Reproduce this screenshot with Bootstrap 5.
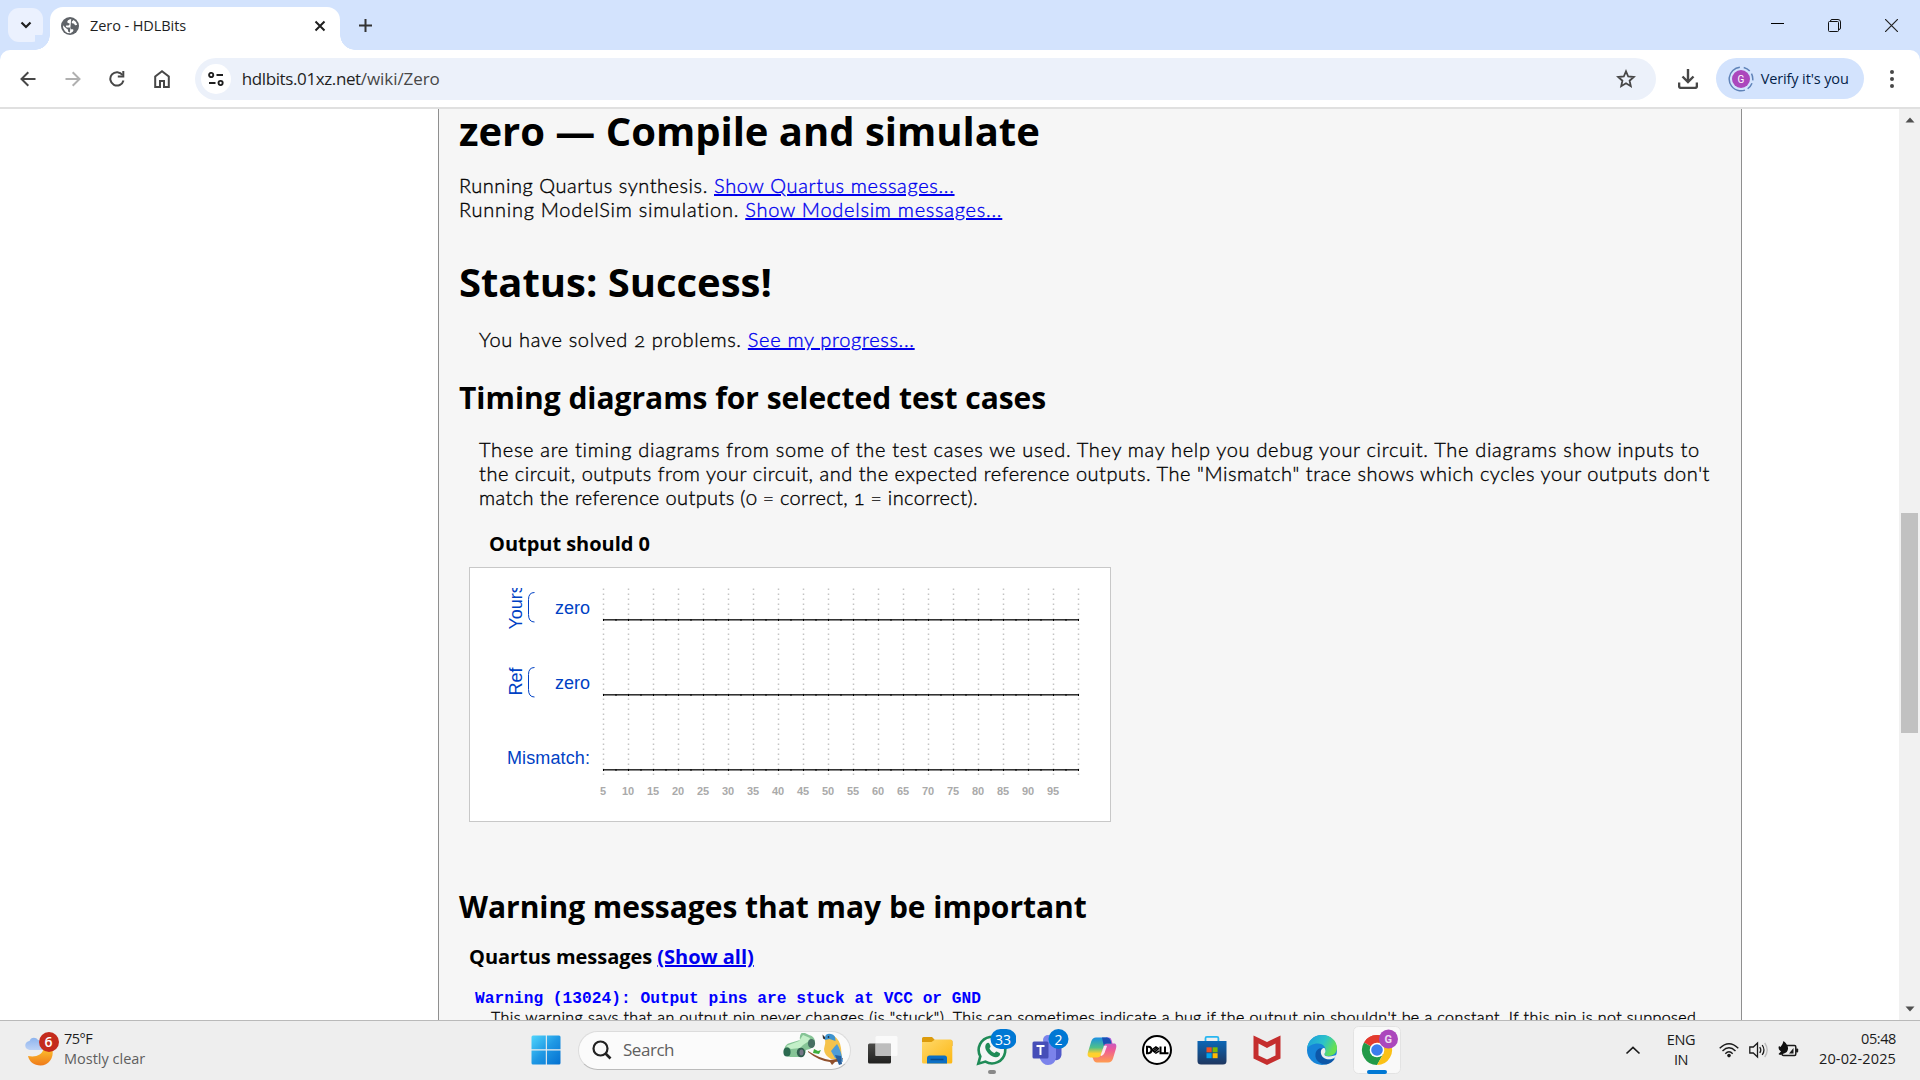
<!DOCTYPE html>
<html lang="en">
<head>
<meta charset="utf-8">
<title>Zero - HDLBits</title>
<link href="https://cdn.jsdelivr.net/npm/bootstrap@5.3.0/dist/css/bootstrap.min.css" rel="stylesheet">
<style>
body{width:1920px;height:1080px;overflow:hidden;background:#fff;color:#000;font-family:"Open Sans","Noto Sans",sans-serif}
svg{display:block;flex:none}
.ws{white-space:nowrap}
.strip{height:50px;background:#d3e3fd}
.tabsearch{width:35px;height:34px;margin:8px 7px 0 8px;border-radius:11px;background:#ebf1fe}
.tab{width:290px;height:43px;margin-top:7px;background:#fff;border-radius:13px 13px 0 0;padding:0 14px 6px 11px}
.tab::before,.tab::after{content:"";position:absolute;bottom:0;width:15px;height:15px}
.tab::before{left:-15px;background:radial-gradient(circle at 0 0,#d3e3fd 14.5px,#fff 15px)}
.tab::after{right:-15px;background:radial-gradient(circle at 100% 0,#d3e3fd 14.5px,#fff 15px)}
.tabtitle{font-size:14.5px;letter-spacing:-.08px;color:#1f1f1f;line-height:20px;margin-left:11px}
.wc{width:57px;height:50px}
.toolbarwrap{background:#d3e3fd;height:59px}
.tools{height:59px;background:#fff;border-radius:10px 10px 0 0;border-bottom:2px solid #e0e0e0;padding-left:5.5px}
.tcell{width:44.7px;height:44px}
.omni{width:1461px;height:42px;margin-left:10.5px;border-radius:21px;background:#ecf1fa;padding:0 20px 0 6px}
.site{width:30px;height:30px;border-radius:50%;background:#fff}
.url{font-size:17px;line-height:24px;color:#1f1f1f;margin-left:11px;letter-spacing:-.39px}
.url span{color:#474747;letter-spacing:-.06px}
.dl{width:46px;margin-left:9px}
.verify{width:148px;height:41px;border-radius:21px;background:#d3e3fd;margin-left:5px;padding-left:12px}
.vtext{font-size:14.5px;color:#041e49;margin-left:7px;letter-spacing:-.13px}
.viewport{height:911px}
.article-col{margin-left:438px;width:1304px;background:#f6f6f6;border:solid #8f8f8f;border-width:0 1px;padding-left:20px}
.scroller{width:21px;background:#f1f1f1}
.thumb{width:17px;height:220px;background:#c1c1c1;margin-top:390px}
h1,h2,h3{font-weight:700;margin:0;white-space:nowrap;color:#000}
h1{font-size:40px;line-height:40px;letter-spacing:-.02px}
h2{font-size:30px;line-height:30px;letter-spacing:-.03px}
h3{font-size:20px;line-height:20px;letter-spacing:-.03px}
.prose{font-family:Lato,sans-serif;font-weight:300;font-size:20px;line-height:24px;margin:0;white-space:nowrap;font-variant-numeric:oldstyle-nums;font-variant-ligatures:none;letter-spacing:.68px;-webkit-text-stroke:.35px}
.ls-a{letter-spacing:.55px}.ls-b{letter-spacing:.745px}.ls-c{letter-spacing:.539px}.ls-d{letter-spacing:.383px}
.ind{margin-left:20px}
.article-col a{color:#00e}
.quartus{font:700 16.2px/18px "Liberation Mono",monospace;color:#00f;white-space:pre;letter-spacing:.017px}
.hint{font-family:Lato,sans-serif;font-weight:300;font-size:16px;line-height:20px;white-space:nowrap;font-variant-ligatures:none;letter-spacing:.415px;-webkit-text-stroke:.35px;margin:-1px 0 0 32px}
.wavebox{width:642px;height:255px;background:#fff;border:1px solid #c8c8c8;margin-left:10px}
.taskbar{height:60px;background:#eee;box-shadow:inset 0 1px #b9b9b9}
.weather{width:518px;padding-left:24px}
.app{width:55px;height:48px}
.searchpill{width:273px;height:39px;border-radius:20px;background:#fbfbfb;border:1px solid #dcdcdc;border-bottom-color:#bbb;margin:0 3px 0 5px;padding:0 6px 0 13px}
.searchtext{font-size:17px;color:#5f5f5f;margin-left:11px;letter-spacing:-.47px}
.tray{font-size:14.5px;line-height:20px;color:#1b1b1b}
</style>
<script src="https://cdn.jsdelivr.net/npm/bootstrap@5.3.0/dist/js/bootstrap.bundle.min.js"></script>
</head>
<body class="d-flex flex-column">
<header>
<div class="strip d-flex">
  <div class="tabsearch d-flex align-items-center justify-content-center"><svg width="12" height="12" viewBox="0 0 12 12"><path d="M1.500 3.500 6 8l4.500-4.500" fill="none" stroke="#1f1f1f" stroke-width="2.200"/></svg></div>
  <div class="tab position-relative d-flex align-items-center">
    <svg width="18" height="18" viewBox="0 0 18 18"><circle cx="9" cy="9" r="9" fill="#5f6368"/><path d="M10.200 2C7.500 2.300 6 4 6.300 5.300c.3.900 1.500.6 2.200 1.300.6.8-.2 1.500-1 1.900H5.200c-.8.600-.2 1.700.8 1.900h2.400c1.300 0 1.500 1 1.700 1.900h1.600c1 .3.8 1.400.2 2.100-.7.900-1.600.5-2 1.900A7.200 7.200 0 0 1 2 8.200l3.300 3.300c.8.600 1.700.6 1.700 1.600v1.500c.6.600 1.700.3 1.900 1.400" fill="#fff"/><path d="M12.600 3c-.4.900-2 1-1.900 2.300.1 1.200 1 1.100 1.900 1.200.9.200.7 1.400 1.600 1.700.9.200 1.500-.3 2-.5A7.200 7.200 0 0 0 12.600 3" fill="#fff"/></svg>
    <span class="tabtitle ws">Zero - HDLBits</span>
    <svg class="ms-auto" width="12" height="12" viewBox="0 0 12 12"><path d="m1.500 1.500 9 9m0-9-9 9" stroke="#1f1f1f" stroke-width="2"/></svg>
  </div>
  <div class="d-flex align-items-center ms-3"><svg style="margin-left:3px" width="13" height="13" viewBox="0 0 13 13"><path d="M6.500 0v13M0 6.500h13" stroke="#333" stroke-width="2"/></svg></div>
  <div class="d-flex ms-auto">
    <div class="wc d-flex align-items-center justify-content-center"><svg width="13" height="13" viewBox="0 0 13 13"><path d="M0 4.500h13" stroke="#000"/></svg></div>
    <div class="wc d-flex align-items-center justify-content-center"><svg width="13" height="13" viewBox="0 0 13 13"><g fill="none" stroke="#111"><rect x=".5" y="2.500" width="10" height="10" rx="1"/><path d="M2.500 2.500V2A1.500 1.500 0 0 1 4 .5h6A2.500 2.500 0 0 1 12.500 3v6a1.500 1.500 0 0 1-1.500 1.500h-.5"/></g></svg></div>
    <div class="wc d-flex align-items-center justify-content-center"><svg width="13" height="13" viewBox="0 0 13 13"><path d="m0 0 13 13M13 0 0 13" stroke="#222" stroke-width="1.200"/></svg></div>
  </div>
</div>
<div class="toolbarwrap">
<div class="tools d-flex align-items-center">
  <div class="tcell d-flex align-items-center justify-content-center"><svg width="16" height="16" viewBox="0 0 16 16"><path d="M15.500 8H2M8.300 1.200 1.500 8l6.800 6.800" fill="none" stroke="#474747" stroke-width="2"/></svg></div>
  <div class="tcell d-flex align-items-center justify-content-center"><svg width="16" height="16" viewBox="0 0 16 16"><path d="M.5 8H14M7.700 1.200 14.500 8l-6.800 6.800" fill="none" stroke="#b0b0b0" stroke-width="2"/></svg></div>
  <div class="tcell d-flex align-items-center justify-content-center"><svg width="16" height="16" viewBox="0 0 16 16"><path d="M13.500 4A6.700 6.700 0 1 0 14.500 9.500" fill="none" stroke="#474747" stroke-width="2"/><path d="M15.300 0v6.500H8.800v-2h4.500V0z" fill="#474747"/></svg></div>
  <div class="tcell d-flex align-items-center justify-content-center"><svg width="16" height="18" viewBox="0 0 16 18"><path d="M1.200 6.500 8 1.300l6.800 5.200v10.400H10v-6H6v6H1.200z" fill="none" stroke="#474747" stroke-width="2"/></svg></div>
  <div class="omni d-flex align-items-center">
    <div class="site d-flex align-items-center justify-content-center"><svg width="16" height="14" viewBox="0 0 16 14"><g fill="none" stroke="#1f1f1f" stroke-width="1.900"><circle cx="3.200" cy="3" r="2.100"/><path d="M8.500 3H15M1 11h6.500"/><circle cx="12.600" cy="11" r="2.100"/></g></svg></div>
    <div class="url ws">hdlbits.01xz.net<span>/wiki/Zero</span></div>
    <svg class="ms-auto" width="20" height="20" viewBox="0 0 20 20"><path d="m10 2.300 2.200 5.200 5.600.5-4.200 3.700 1.200 5.500-4.800-2.900-4.800 2.900 1.200-5.500L2.200 8l5.600-.5z" fill="none" stroke="#474747" stroke-width="1.800"/></svg>
  </div>
  <div class="dl d-flex align-items-center justify-content-center"><svg width="20" height="20" viewBox="0 0 20 20"><g fill="none" stroke="#474747" stroke-width="2.400"><path d="M10 0v12M4.500 7.500 10 13l5.500-5.500M1.100 13.500v3.600q0 1.800 1.800 1.800h14.200q1.800 0 1.800-1.800v-3.600"/></g></svg></div>
  <div class="verify d-flex align-items-center">
    <svg width="26" height="26" viewBox="0 0 26 26"><circle cx="13" cy="13" r="11.800" fill="none" stroke="#5f83b8" stroke-width="1.500" stroke-dasharray="34 4 7 3 7 3 7 3"  transform="rotate(98 13 13)"/><circle cx="13" cy="13" r="9" fill="#ab47bc"/><text x="13" y="17" font-size="10" text-anchor="middle" fill="#fff" font-family="Roboto">G</text></svg>
    <span class="vtext ws">Verify it's you</span>
  </div>
  <svg style="margin-left:26px" width="4" height="18" viewBox="0 0 4 18"><g fill="#474747"><circle cx="2" cy="2" r="2"/><circle cx="2" cy="9" r="2"/><circle cx="2" cy="16" r="2"/></g></svg>
</div>
</div>
</header>

<main class="viewport d-flex overflow-hidden">
  <article class="article-col overflow-hidden">
    <h1 class="pt-1" style="margin-top:-2px">zero — Compile and simulate</h1>
    <p class="prose" style="margin-top:22px"><span class="ls-a">Running Quartus synthesis.</span> <a href="#">Show Quartus messages...</a><br><span class="ls-b">Running ModelSim simulation. <a href="#">Show Modelsim messages...</a></span></p>
    <h1 style="margin-top:41px">Status: Success!</h1>
    <p class="prose ind" style="margin-top:25px">You have solved 2 problems. <a href="#">See my progress...</a></p>
    <h2 style="margin-top:32px">Timing diagrams for selected test cases</h2>
    <p class="prose ind" style="margin-top:24px">These are timing diagrams from some of the test cases we used. They may help you debug your circuit. The diagrams show inputs to<br><span class="ls-c">the circuit, outputs from your circuit, and the expected reference outputs. The "Mismatch" trace shows which cycles your outputs don't</span><br><span class="ls-d">match the reference outputs (0 = correct, 1 = incorrect).</span></p>
    <h3 style="margin:25px 0 13px 30px">Output should 0</h3>
    <div class="wavebox"><svg id="wave" width="640" height="253" viewBox="470 568 640 253" font-family="Liberation Sans, Arial, sans-serif"></svg></div>
    <h2 style="margin-top:70px">Warning messages that may be important</h2>
    <h3 style="margin:25px 0 0 10px">Quartus messages <a href="#">(Show all)</a></h3>
    <div class="quartus" style="margin:23px 0 0 16px">Warning (13024): Output pins are stuck at VCC or GND</div>
    <div class="hint">This warning says that an output pin never changes (is "stuck"). This can sometimes indicate a bug if the output pin shouldn't be a constant. If this pin is not supposed</div>
  </article>
  <div class="scroller ms-auto d-flex flex-column align-items-center">
    <svg width="10" height="6" viewBox="0 0 10 6" style="margin-top:8px"><path d="M5 .5 9.500 5.500h-9z" fill="#505050"/></svg>
    <div class="thumb"></div>
    <svg class="mt-auto" width="10" height="6" viewBox="0 0 10 6" style="margin-bottom:8px"><path d="M.5.500h9L5 5.500z" fill="#505050"/></svg>
  </div>
</main>

<footer class="taskbar d-flex align-items-center">
  <div class="weather d-flex flex-shrink-0">
    <svg width="36" height="36" viewBox="24 1026 36 36"><defs><linearGradient id="mo" x2="0" y2="1"><stop stop-color="#fcbf2d"/><stop offset="1" stop-color="#ef7a1a"/></linearGradient><linearGradient id="cl" x2="0" y2="1"><stop stop-color="#8db4ee"/><stop offset="1" stop-color="#bdd2f6"/></linearGradient></defs><path d="M52.500 1044c1.500 8-4 15.500-12 15.500-6.500 0-11-3.500-12.500-9.500 8 1.500 14-1 15.500-7z" fill="url(#mo)"/><path d="M30 1044a4.500 4.500 0 0 1-.5-9c1-4 6.500-4.500 8.500-1 4 .5 5 4 5 10z" fill="url(#cl)"/><circle cx="49" cy="1036" r="10" fill="#c42b1c"/><text x="48.500" y="1041" font-size="14" font-weight="600" fill="#fff" text-anchor="middle" font-family="Open Sans">6</text></svg>
    <div class="tray ws" style="margin:-3px 0 0 4px"><div style="letter-spacing:-.5px">75°F</div><div style="color:#5e5e5e">Mostly clear</div></div>
  </div>
  <div class="app d-flex justify-content-center"><svg width="48" height="48" viewBox="0 0 48 48"><defs><linearGradient id="wn" x1="0" y1="0" x2="1" y2="1"><stop stop-color="#50d5fc"/><stop offset=".5" stop-color="#1f98e4"/><stop offset="1" stop-color="#0470d0"/></linearGradient></defs><path d="M11 9.500h12.800v13.800H9.500V11q0-1.500 1.500-1.500zM24.900 9.500H37q1.500 0 1.500 1.500v12.300H24.900zM9.500 24.400h14.300v14.100H11q-1.500 0-1.500-1.500zM24.900 24.400h13.600V37q0 1.500-1.500 1.500H24.900z" fill="url(#wn)"/></svg></div>
  <div class="searchpill d-flex align-items-center flex-shrink-0">
    <svg width="20" height="20" viewBox="0 0 20 20"><circle cx="8.500" cy="8.500" r="7" fill="none" stroke="#222" stroke-width="2.200"/><path d="m13.500 13.500 5 5" stroke="#222" stroke-width="2.600"/></svg>
    <span class="searchtext ws">Search</span>
    <svg class="ms-auto" width="62" height="34" viewBox="782 1034 62 34"><path d="M784 1051q1-6 6-7l10-3q-1-6 3-8l6 3q5 1 6 6 0 6-5 8l-4 1q-1 7-6 7l-10 0q-6-1-6-7z" fill="#86c496"/><path d="M786 1047l13-5 4-6 7 3-1 3-6 4-3 3-9 1z" fill="#c3efc8"/><ellipse cx="787" cy="1053" rx="3.600" ry="4.500" fill="#2c6a50"/><ellipse cx="801" cy="1053.500" rx="4.200" ry="4.800" fill="#315e4e"/><ellipse cx="811.500" cy="1044.500" rx="3.600" ry="4.600" fill="#476f63"/><ellipse cx="801.500" cy="1053.500" rx="2" ry="3" fill="#778"/><path d="M808 1052q13 8 22 9l13-2-1 3-7 1-3 3-2-3q-11-1-22-10z" fill="#90502c"/><path d="M813 1054l1-4 4 2 3-1-2 4z" fill="#3fae3c"/><path d="M825 1039q4-3 9-2 6 4 7 12l1 11-11 0q-7-4-7-10 2-6 1-11z" fill="#f5c34c"/><path d="M825 1038q1-4 6-3 5 1 4.500 7l-6-2-4.500 1z" fill="#3e93cf"/><path d="M831 1052q4-5 6-7 4 6 6 18l-8-4z" fill="#4d9cd8"/><path d="M835 1056l6 1 1 8-3 1z" fill="#285f9c"/><path d="M825 1038l-2.500-2.500.5 4 2 1z" fill="#333"/><circle cx="828.500" cy="1038" r=".8" fill="#111"/></svg>
  </div>
  <div class="app d-flex justify-content-center"><svg width="48" height="48" viewBox="0 0 48 48"><defs><linearGradient id="tv" x2="0" y2="1"><stop stop-color="#4b4b49"/><stop offset="1" stop-color="#20201f"/></linearGradient></defs><rect x="10" y="17.500" width="23" height="20" rx="1.500" fill="url(#tv)"/><rect x="17.500" y="10" width="22" height="20" rx="1.500" fill="#fff" opacity=".72"/><rect x="17.500" y="17.500" width="15.500" height="12.500" fill="#bdbdbd"/></svg></div>
  <div class="app d-flex justify-content-center"><svg width="48" height="48" viewBox="0 0 48 48"><defs><linearGradient id="fo" x2="1" y2="1"><stop stop-color="#ffd96b"/><stop offset="1" stop-color="#fcb714"/></linearGradient></defs><path d="M9 20v-7.500q0-1.500 1.500-1.500H19l3 3h16q1.500 0 1.500 1.500V20z" fill="#dc9b0c"/><path d="M9 16h9.500l3.500-2.500h15.500q1.800 0 1.800 1.800V36q0 1.500-1.500 1.500H10.500Q9 37.500 9 36z" fill="url(#fo)"/><path d="M14 37.500V32q0-2.500 2.500-2.500h15q2.500 0 2.500 2.500v5.500z" fill="#0c6fc4"/><path d="M17.500 33.500h13" stroke="#0a4a8a" stroke-width="1.500"/></svg></div>
  <div class="app d-flex justify-content-center"><svg width="48" height="48" viewBox="0 0 48 48"><path d="M10.300 37.700l2-7.300A13.300 13.300 0 1 1 17.400 35.600z" fill="#fff" fill-opacity=".4" stroke="#1f8b57" stroke-width="2.600"/><path d="M18.500 17.500c1-1.200 2.500-1 3 .3l1 2.500c.3.800-1.200 1.800-1 2.300 1 2 2.700 3.600 4.800 4.400.7.200 1.500-1.800 2.300-1.500l3 1.500c.8.500.4 2.200-.4 3-3 2.500-7.500.5-10.200-2-2.500-2.500-5.500-7-2.500-10.500z" fill="#1f8b57"/><rect x="22.500" y="3" width="26" height="20" rx="10" fill="#0078d4"/><text x="35" y="18.500" font-size="14" fill="#fff" text-anchor="middle" font-family="Open Sans">33</text><rect x="20" y="44" width="8" height="4" rx="2" fill="#888"/></svg></div>
  <div class="app d-flex justify-content-center"><svg width="48" height="48" viewBox="0 0 48 48"><circle cx="25" cy="14" r="5" fill="#7b83eb"/><path d="M30 18h7q1.500 0 1.500 1.500V29q-1 6-7 5z" fill="#5059c9"/><path d="M17 18h16v13.500q-1 7.500-8 7.500-5 0-8-6z" fill="#7b83eb"/><rect x="9.500" y="15.500" width="16" height="17" rx="1.500" fill="#464eb8"/><path d="M13.500 20h8M17.500 20v9" stroke="#fff" stroke-width="2"/><circle cx="35.500" cy="13" r="10" fill="#0078d4"/><text x="35.500" y="18.500" font-size="14" fill="#fff" text-anchor="middle" font-family="Open Sans">2</text></svg></div>
  <div class="app d-flex justify-content-center"><svg width="48" height="48" viewBox="0 0 48 48"><defs><linearGradient id="ca" x2="0" y2="1"><stop stop-color="#1b8fe3"/><stop offset=".5" stop-color="#4fc08a"/><stop offset=".8" stop-color="#ffd12e"/></linearGradient><linearGradient id="cb" x2="0" y2="1"><stop stop-color="#a557e8"/><stop offset=".5" stop-color="#ee5b96"/><stop offset="1" stop-color="#ff9c4f"/></linearGradient></defs><path d="M28 11.500h3q2 0 2.700 3l.8 3H37q2 1 1 5l-3 10q-1.200 4-5 4H19q-3 0-4-4l-1-2h6q2 0 3-3l3-9q.8-2 3-2z" fill="url(#cb)"/><path d="M18 11.500h10.500q3 0 4 3l1 3H29q-2.500 0-3.300 3l-2.700 8q-1 3-3.500 3H12q-3.500-1-2-5.500l3.200-10.500q1.300-4 4.800-4z" fill="url(#ca)"/><path d="M24 11.500h4.500q3 0 4 3l1 3H29q-2.500 0-3.300 2z" fill="#1b4eb4"/><path d="M26 20l-3.500 9.500 1 .5q2-1 3-3l2.500-7q-1-1-3 0z" fill="#fff" opacity=".85"/></svg></div>
  <div class="app d-flex justify-content-center"><svg width="48" height="48" viewBox="0 0 48 48"><circle cx="24" cy="24" r="14" fill="#fff" stroke="#000" stroke-width="2"/><g fill="none" stroke="#000" stroke-width="2"><path d="M14 20.800v6.400h1.500q3-.2 3-3.200t-3-3.200zM27.500 20.500v6.700h4M32 20.500v6.700h3.500"/><path d="m18.700 24 4.200-3.200 3 2M20 25l4-3M21 26.300l4.500-3.500M18.700 24l4.200 3.200 3.500-2.300" stroke-width="1.500"/></g></svg></div>
  <div class="app d-flex justify-content-center"><svg width="48" height="48" viewBox="0 0 48 48"><defs><linearGradient id="st" x2="0" y2="1"><stop stop-color="#0b66b5"/><stop offset="1" stop-color="#1f3760"/></linearGradient></defs><path d="M17.500 15.500v-3.300q0-1.400 1.400-1.400H29q1.400 0 1.400 1.400v3.300" fill="none" stroke="#28b6f0" stroke-width="1.800"/><path d="M9.500 15h29v20q0 3.500-3.500 3.500H13q-3.500 0-3.500-3.500z" fill="url(#st)"/><path d="M18.500 21.300h5.200v5h-5.200z" fill="#f25022"/><path d="M24.600 21.300h5v5h-5z" fill="#7fba00"/><path d="M18.500 27.200h5.200v5h-5.200z" fill="#00a4ef"/><path d="M24.600 27.200h5v5h-5z" fill="#ffb900"/></svg></div>
  <div class="app d-flex justify-content-center"><svg width="48" height="48" viewBox="0 0 48 48"><path d="M10.500 9.500 24 16l13.500-6.500v23L24 39l-13.500-6.500zM15.500 17.500v12L24 33.500l8.500-4v-12L24 22z" fill="#c01818" opacity=".9" fill-rule="evenodd"/></svg></div>
  <div class="app d-flex justify-content-center"><svg width="48" height="48" viewBox="0 0 48 48"><defs><linearGradient id="ea" x2="1" y2=".4"><stop stop-color="#1a9be0"/><stop offset=".6" stop-color="#2cc3c8"/><stop offset="1" stop-color="#66e052"/></linearGradient></defs><circle cx="24" cy="24" r="15" fill="#1684d8"/><path d="M9 23C10 14 16 9 24 9c9 0 15 6 15 13 0 5-4 8-8.500 8-4 0-5-1.500-4-3 3-5-1-9.500-6.500-9.500C14.500 17.500 10 20 9 23z" fill="url(#ea)"/><path d="M17.500 28c-1 6 4.500 10.500 11 10.500 4-1 6.500-3 8.500-6-6 2.500-14 1-13.500-6 0-2 1-3 2-3.500-4-2-7.500 1-8 5z" fill="#0d57a8"/><path d="M26.500 22c-3 0-4 2.500-3.500 5.500.8 4.500 6 6.500 10.500 5.500 2-.4 4-1.500 6-4.500-3.500 1.800-13.200 3.500-13.200-.5 1.500-2 1.500-4 .2-6z" fill="#eee"/></svg></div>
  <div class="app d-flex justify-content-center"><svg width="48" height="48" viewBox="0 0 48 48"><rect x=".5" y=".5" width="47" height="47" rx="5" fill="#f9f9f9" stroke="#e3e3e3"/><path d="M24 24 11 16.500A15 15 0 0 1 37 16.500L24 17z" fill="#e33b2e"/><path d="M24 24 11 16.500A15 15 0 0 0 24 39l6.500-11.500z" fill="#229a48"/><path d="M24 16.500h13A15 15 0 0 1 24 39l6.500-11.500z" fill="#fbc116"/><path d="M11 16.500A15 15 0 0 1 37 16.500H24z" fill="#e33b2e"/><circle cx="24" cy="24" r="7.300" fill="#fff"/><circle cx="24" cy="24" r="5.800" fill="#3b7ded"/><circle cx="35.500" cy="13" r="9.500" fill="#ab47bc"/><text x="35.200" y="17" font-size="11" font-weight="700" fill="#eddcf1" text-anchor="middle" font-family="Roboto">G</text><rect x="14" y="44" width="20" height="4" rx="2" fill="#0078d4"/></svg></div>
  <div class="tray d-flex align-items-center ms-auto" style="padding-right:24px">
    <svg width="16" height="9" viewBox="0 0 16 9"><path d="M1.500 7.500 8 1.500l6.500 6" fill="none" stroke="#1b1b1b" stroke-width="1.700"/></svg>
    <div class="text-center ws" style="width:77px;padding-left:3px;letter-spacing:-.4px"><div>ENG</div><div>IN</div></div>
    <svg style="margin-left:1px" width="20" height="16" viewBox="0 0 20 16"><g fill="none" stroke="#1b1b1b" stroke-width="1.400"><path d="M.7 6.200q9.300-9 18.600 0M3.500 9q6.500-6.300 13 0M6.300 11.700q3.700-3.700 7.400 0"/></g><circle cx="10" cy="13.600" r="1.800" fill="#1b1b1b"/></svg>
    <svg style="margin-left:10px" width="20" height="18" viewBox="0 0 20 18"><g fill="none" stroke="#1b1b1b" stroke-width="1.300"><path d="M.8 6h3.500L8.500 2v14l-4.200-4H.8zM10.800 6q2 3 0 6M13.200 4q3.500 5 0 10"/><path d="M15.700 2q5 7 0 14" stroke="#bbb"/></g></svg>
    <svg style="margin-left:9px" width="22" height="18" viewBox="0 0 22 18"><path d="M9 4.500h7.500q1.300 0 1.300 1.500v7q0 1.500-1.300 1.500H5.500q-1.500 0-1.500-2" fill="none" stroke="#1b1b1b" stroke-width="1.500"/><rect x="18" y="7.500" width="2.200" height="4" rx="1" fill="#1b1b1b"/><path d="M11 12.500 15.500 7v5.500z" fill="#1b1b1b"/><path d="M5.500 0q5 4 4.500 8-.5 3.500-4 4.500L2 14l-1.500-1L3 10.500Q-.5 8 1 5l1.500 1Q5 3 5.500 0z" fill="#111"/></svg>
    <div class="text-end ws" style="width:96px;margin-top:-2px"><div style="letter-spacing:-.4px">05:48</div><div style="letter-spacing:.13px">20-02-2025</div></div>
  </div>
</footer>
<script>
// Timing diagram: dotted cycle guides, flat traces and their labels
let s='<defs><clipPath id="lane"><rect x="500" y="588" width="40" height="200"/></clipPath></defs>';
for(let i=0;i<20;i++){const x=603.5+25*i;
 s+=`<path d="M${x} 588.500V775" stroke="#c4c4c4" stroke-width="1.500" stroke-dasharray="1.500 3.500"/>`;
 if(i<19)s+=`<text x="${x-.5}" y="795" font-size="11" font-weight="700" fill="#aaa" text-anchor="middle">${5*(i+1)}</text>`;}
for(const y of [619,694,769]){s+=`<path d="M603 ${y+.5}H1079" stroke="#333"/><path d="M603 ${y+1.5}H1079" stroke="#888"/>`;
 for(let i=0;i<39;i++)s+=`<path d="M${603.5+12.5*i} ${y}v2" stroke="#000"/>`;}
s+='<g fill="#0041c4" font-size="18"><text x="590" y="614" text-anchor="end">zero</text><text x="590" y="689" text-anchor="end">zero</text><text x="507" y="764" textLength="83">Mismatch:</text><g clip-path="url(#lane)"><text transform="translate(521.500 629.500) rotate(-90)">Yours</text><text transform="translate(521.500 695.500) rotate(-90)">Ref</text></g></g><g fill="none" stroke="#0041c4"><path d="M534.500 592.500q-6 0-6 7v15q0 7.500 6 7.500M534.500 667.500q-6 0-6 7v15q0 7.500 6 7.500"/></g>';
document.getElementById('wave').innerHTML=s;
</script>
</body>
</html>
